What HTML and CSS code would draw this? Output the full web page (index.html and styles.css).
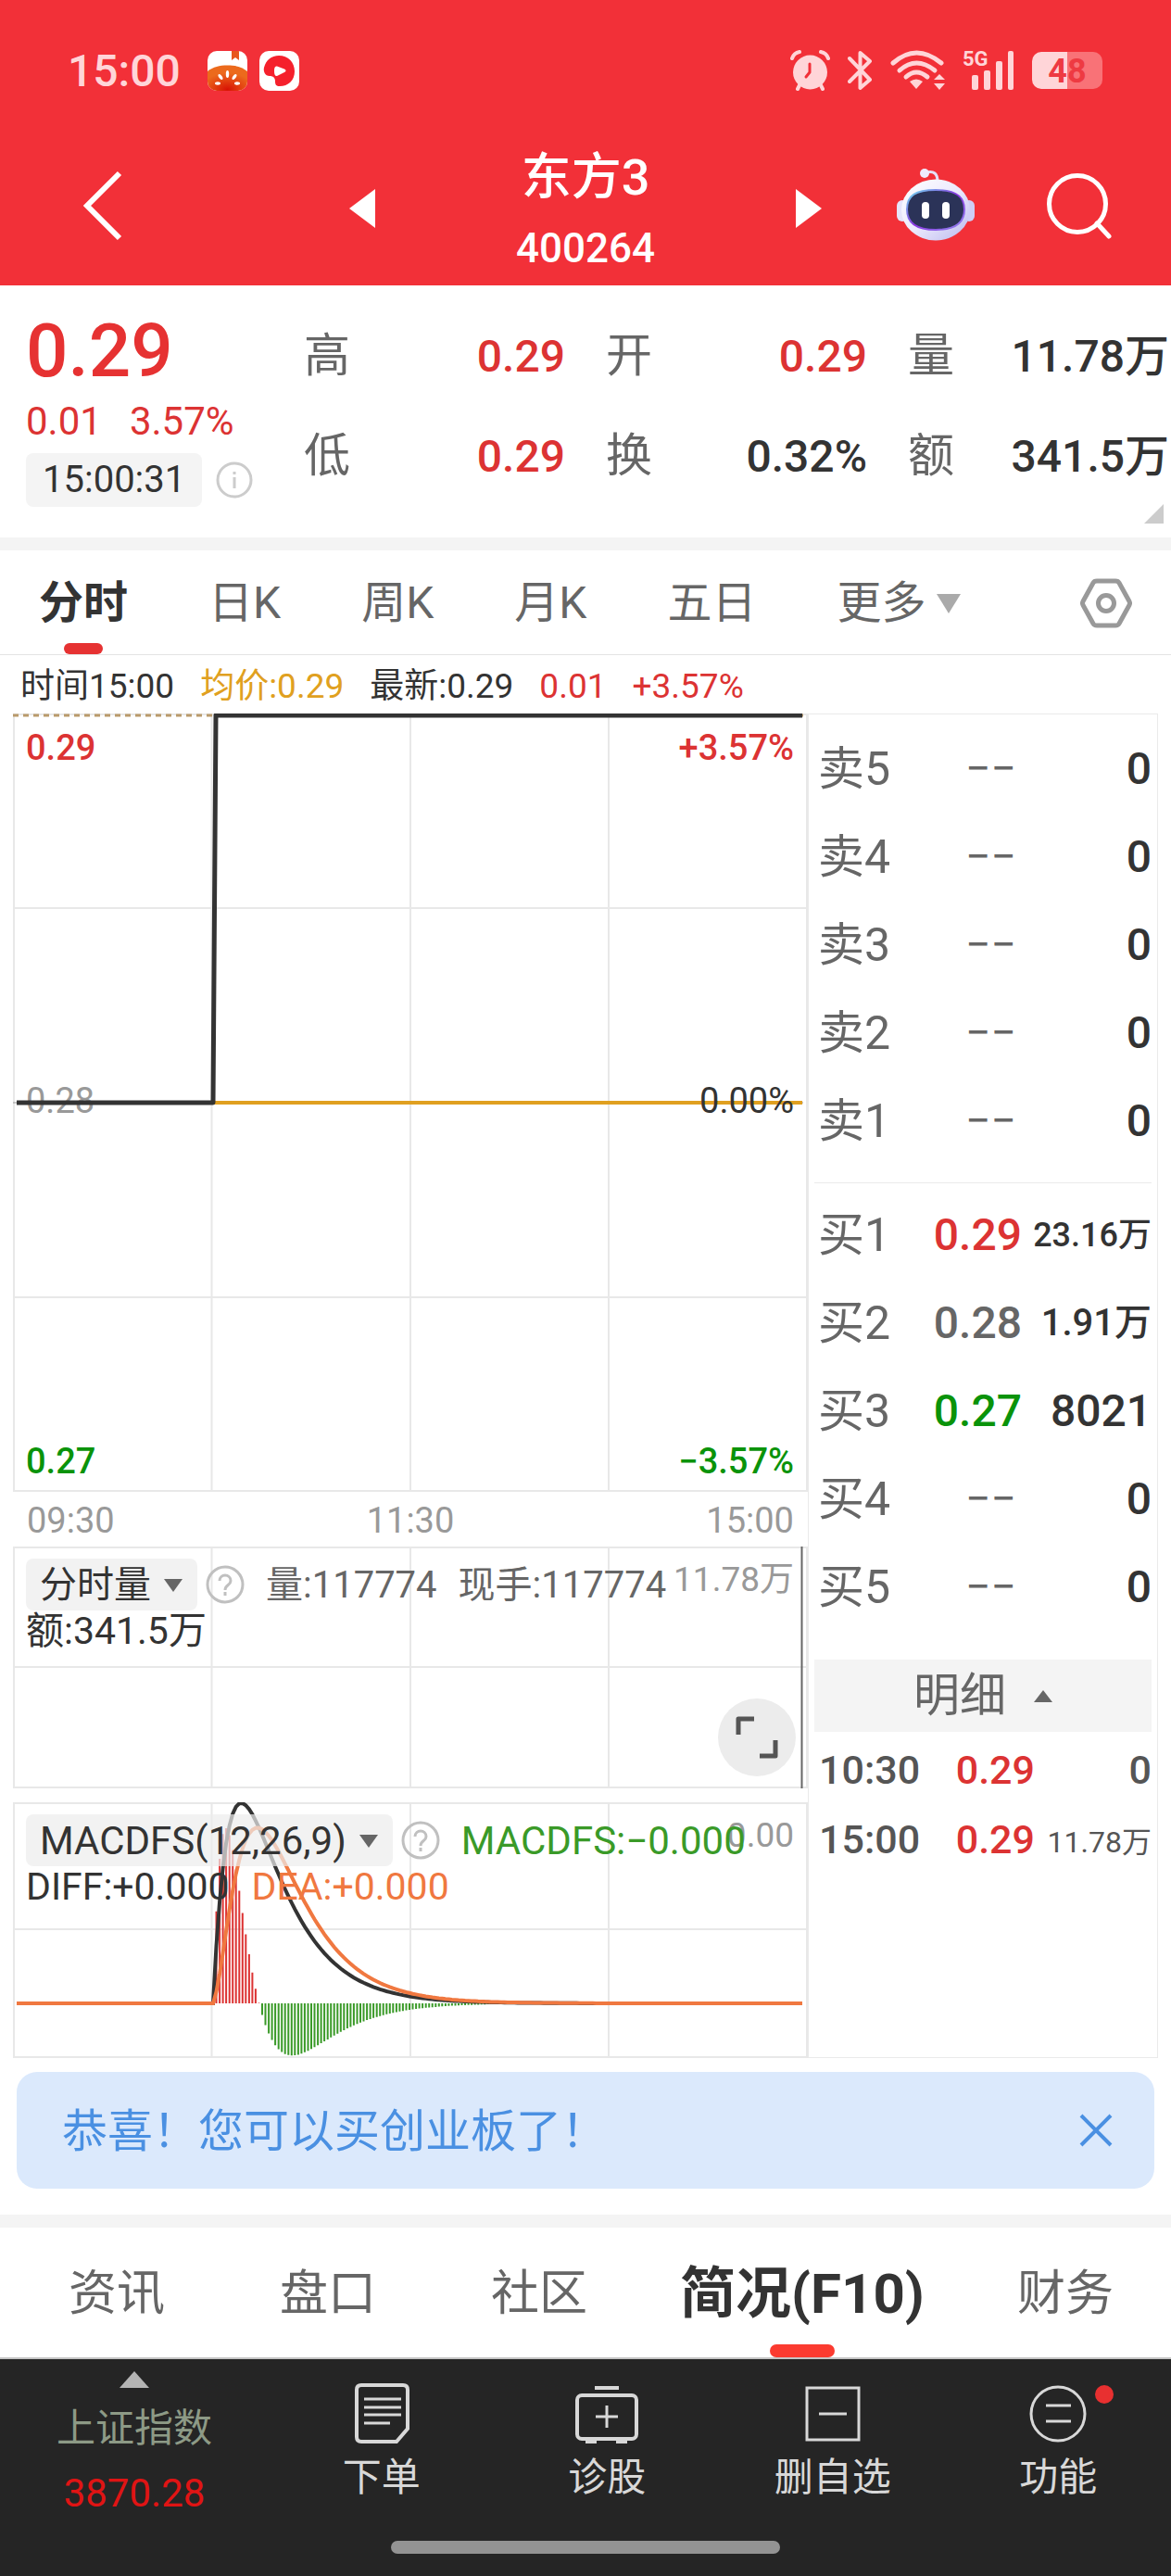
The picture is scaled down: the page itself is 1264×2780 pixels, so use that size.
FILE: index.html
```html
<!DOCTYPE html>
<html lang="zh-CN">
<head>
    <meta charset="UTF-8">
    <meta name="viewport" content="width=device-width, initial-scale=1.0">
    <title>东方3 400264</title>
    <link rel="stylesheet" href="styles.css">
</head>
<body>
    <header class="header">
        <div class="status-bar">
            <span class="clock">15:00</span>
            <div class="status-apps">
                <svg width="43" height="43" viewBox="0 0 43 43">
                    <defs>
                        <radialGradient id="tomato" cx="50%" cy="95%" r="65%">
                            <stop offset="0" stop-color="#d81204"/>
                            <stop offset="1" stop-color="#ec6a1c"/>
                        </radialGradient>
                        <clipPath id="appClip"><rect width="43" height="43" rx="10"/></clipPath>
                    </defs>
                    <g clip-path="url(#appClip)">
                        <rect width="43" height="43" fill="#fff"/>
                        <path d="M0 22C6 17 13 15.500 21.500 15.500S37 17 43 22V43H0z" fill="url(#tomato)"/>
                        <path d="M26 0h8v10l-4-3-4 3z" fill="#e8561c"/>
                        <g fill="#fff">
                            <ellipse cx="21.500" cy="25" rx="1.700" ry="4"/>
                            <ellipse cx="14" cy="28" rx="1.700" ry="3.500" transform="rotate(-35 14 28)"/>
                            <ellipse cx="29" cy="28" rx="1.700" ry="3.500" transform="rotate(35 29 28)"/>
                            <ellipse cx="11" cy="35" rx="3" ry="1.700"/>
                            <ellipse cx="32" cy="35" rx="3" ry="1.700"/>
                        </g>
                    </g>
                </svg>
                <svg width="43" height="43" viewBox="0 0 43 43">
                    <rect width="43" height="43" rx="10" fill="#fff"/>
                    <path d="M21 5C31 5 38 12 38 22S31 38 22 38C18 38 17 36 17 33C17 29 15 27 11 27C6 27 4 22 5 18C7 10 13 5 21 5z" fill="#f5202c"/>
                    <path d="M19 16.500c-2 0-3 1-3 5s1 6 3 5.500l8-4c2-1 2-2.500 0-3.500z" fill="#fff"/>
                </svg>
            </div>
            <div class="status-icons">
                <svg width="43" height="44" viewBox="0 0 43 44">
                    <g fill="none" stroke="#ffd5d8" stroke-linecap="round" stroke-width="4">
                        <path d="M10 38l-2 4M33 38l2 4"/>
                        <path d="M2 9Q4 3 10 2M41 9Q39 3 33 2"/>
                    </g>
                    <circle cx="21.500" cy="24" r="18.500" fill="#ffd5d8"/>
                    <path d="M21 15v9l-4 5" fill="none" stroke="#f23038" stroke-width="3" stroke-linecap="round" stroke-linejoin="round"/>
                </svg>
                <svg width="27" height="44" viewBox="0 0 27 44">
                    <path d="M2 9L24 32L13.500 41V3L24 12L2 34" fill="none" stroke="#ffd5d8" stroke-width="4" stroke-linecap="round" stroke-linejoin="round"/>
                </svg>
                <svg width="59" height="44" viewBox="0 0 59 44">
                    <g fill="none" stroke="#ffd5d8" stroke-width="5" stroke-linecap="round">
                        <path d="M3 14Q28 -8 55 14"/>
                        <path d="M10 22Q28 6 48 22"/>
                        <path d="M17 29Q28 19 40 29"/>
                    </g>
                    <path d="M21 34q7-5 14 0l-7 8z" fill="#ffd5d8"/>
                    <path d="M47 32l6-6 6 6zM47 36h12l-6 7z" fill="#ffd5d8"/>
                </svg>
                <div class="signal">
                    <span class="signal-type">5G</span>
                    <svg width="56" height="44" viewBox="0 0 56 44">
                        <g fill="#ffd5d8">
                            <rect x="10" y="27" width="7" height="16" rx="2"/>
                            <rect x="23" y="22" width="7" height="21" rx="2"/>
                            <rect x="36" y="12" width="7" height="31" rx="2"/>
                            <rect x="49" y="1" width="6" height="42" rx="2"/>
                        </g>
                    </svg>
                </div>
                <span class="battery">48</span>
            </div>
        </div>
        <div class="title-bar">
            <div class="title-left">
                <button class="icon-btn" aria-label="返回">
                    <svg width="44" height="76" viewBox="0 0 44 76"><path d="M41 3L6 38L41 73" fill="none" stroke="#fff" stroke-width="6"/></svg>
                </button>
            </div>
            <div class="title-switch">
                <button class="icon-btn" aria-label="上一只">
                    <svg width="28" height="42" viewBox="0 0 28 42"><path d="M28 0v42L0 21z" fill="#fff"/></svg>
                </button>
                <h1 class="stock-title">东方3<span>400264</span></h1>
                <button class="icon-btn" aria-label="下一只">
                    <svg width="28" height="42" viewBox="0 0 28 42"><path d="M0 0v42l28-21z" fill="#fff"/></svg>
                </button>
            </div>
            <div class="title-right">
                <button class="icon-btn" aria-label="智能助手">
                    <svg width="84" height="84" viewBox="0 0 84 84">
                        <defs>
                            <linearGradient id="shell" x1="0" y1="0" x2="1" y2="1">
                                <stop offset="0" stop-color="#fff"/>
                                <stop offset="0.5" stop-color="#eceafd"/>
                                <stop offset="1" stop-color="#b9b8ee"/>
                            </linearGradient>
                            <linearGradient id="rim" x1="0" y1="0" x2="1" y2="1">
                                <stop offset="0" stop-color="#6fe0ee"/>
                                <stop offset="0.5" stop-color="#8a35e0"/>
                                <stop offset="1" stop-color="#8f86ee"/>
                            </linearGradient>
                        </defs>
                        <path d="M32 6q12-3 12 10" fill="none" stroke="#e6e0f8" stroke-width="3"/>
                        <circle cx="30" cy="7" r="5" fill="#efeafd"/>
                        <rect x="0" y="36" width="12" height="23" rx="6" fill="#e6e4fb"/>
                        <rect x="72" y="36" width="12" height="23" rx="6" fill="#cfcdf6"/>
                        <ellipse cx="42" cy="46.500" rx="37" ry="33" fill="url(#shell)"/>
                        <path d="M42 25C64 25 73 32 73 46S63 68 42 68S11 61 11 46S20 25 42 25z" fill="#2b3358" stroke="url(#rim)" stroke-width="2"/>
                        <rect x="27" y="38" width="8" height="18" rx="4" fill="#fff"/>
                        <rect x="49" y="38" width="8" height="18" rx="4" fill="#fff"/>
                    </svg>
                </button>
                <button class="icon-btn" aria-label="搜索">
                    <svg width="70" height="72" viewBox="0 0 70 72">
                        <circle cx="33" cy="34" r="30.500" fill="none" stroke="#fff" stroke-width="5"/>
                        <path d="M54 55l13 14" stroke="#fff" stroke-width="5" stroke-linecap="round"/>
                    </svg>
                </button>
            </div>
        </div>
    </header>

    <section class="quote">
        <div class="quote-main">
            <div class="price up">0.29</div>
            <div class="change up"><span>0.01</span><span>3.57%</span></div>
            <div class="quote-time">
                <time>15:00:31</time>
                <svg width="40" height="40" viewBox="0 0 40 40">
                    <circle cx="20" cy="20" r="18" fill="none" stroke="#ccc" stroke-width="3"/>
                    <path d="M20 17v12M20 11v3" stroke="#ccc" stroke-width="3"/>
                </svg>
            </div>
        </div>
        <dl class="stats">
            <div><dt>高</dt><dd class="up">0.29</dd></div>
            <div><dt>开</dt><dd class="up">0.29</dd></div>
            <div><dt>量</dt><dd>11.78万</dd></div>
            <div><dt>低</dt><dd class="up">0.29</dd></div>
            <div><dt>换</dt><dd>0.32%</dd></div>
            <div><dt>额</dt><dd>341.5万</dd></div>
        </dl>
        <span class="corner"></span>
    </section>

    <nav class="period-tabs">
        <button class="active">分时</button>
        <button>日K</button>
        <button>周K</button>
        <button>月K</button>
        <button>五日</button>
        <button class="more">更多<i class="caret-down"></i></button>
        <button class="settings" aria-label="设置">
            <svg width="56" height="54" viewBox="0 0 56 54">
                <g fill="none" stroke="#999" stroke-width="5" stroke-linejoin="round">
                    <path d="M18 3h20q3 0 4 2l11 20q1 2 0 4L42 49q-1 2-4 2H18q-3 0-4-2L3 29q-1-2 0-4L14 5q1-2 4-2z"/>
                    <circle cx="28" cy="27" r="8.500"/>
                </g>
            </svg>
        </button>
    </nav>

    <div class="legend">
        <span>时间15:00</span>
        <span class="avg">均价:0.29</span>
        <span>最新:0.29</span>
        <span class="up">0.01</span>
        <span class="up">+3.57%</span>
    </div>

    <main class="board">
        <div class="charts">
            <div class="panel panel-price">
                <span class="axis axis-left axis-mid muted">0.28</span>
                <svg class="plot" viewBox="0 0 858 840" preserveAspectRatio="none">
                    <path class="grid" d="M1 0V840M214.500 0V840M429 0V840M643 0V840M857 0V840M0 1H858M0 210H858M0 630H858M0 839H858"/>
                    <path class="base" d="M0 420H858"/>
                    <path class="limit" d="M0 2H858"/>
                    <path class="line-avg" d="M216 420H852"/>
                    <path class="line-price" d="M4 420H216L219 2H852"/>
                </svg>
                <span class="axis axis-left axis-top up">0.29</span>
                <span class="axis axis-right axis-top up">+3.57%</span>
                <span class="axis axis-right axis-mid">0.00%</span>
                <span class="axis axis-left axis-bottom down">0.27</span>
                <span class="axis axis-right axis-bottom down">−3.57%</span>
            </div>
            <div class="times"><span>09:30</span><span>11:30</span><span>15:00</span></div>

            <div class="panel panel-volume">
                <svg class="plot" viewBox="0 0 858 261" preserveAspectRatio="none">
                    <path class="grid" d="M1 0V261M214.500 0V261M429 0V261M643 0V261M857 0V261M0 1H858M0 130H858M0 260H858"/>
                    <path class="volume-bar" d="M851.500 0V261"/>
                </svg>
                <span class="scale muted">11.78万</span>
                <div class="indicator">
                    <button class="picker">分时量<i class="caret-down"></i></button>
                    <svg class="help" width="42" height="42" viewBox="0 0 42 42">
                        <circle cx="21" cy="21" r="19" fill="none" stroke="#c0c0c0" stroke-width="3"/>
                        <path d="M15 17c0-8 12-8 12 0c0 5-6 4-6 10M21 29v4" fill="none" stroke="#c0c0c0" stroke-width="3"/>
                    </svg>
                    <span class="gray">量:117774</span>
                    <span class="gray">现手:117774</span>
                </div>
                <div class="indicator-sub"><span>额:341.5万</span></div>
                <button class="expand" aria-label="全屏">
                    <svg width="46" height="46" viewBox="0 0 46 46"><path d="M3 20V3H20M43 26V43H26" fill="none" stroke="#555" stroke-width="5" stroke-linejoin="round"/></svg>
                </button>
            </div>

            <div class="panel panel-macd">
                <svg class="plot" id="macd" viewBox="0 0 858 276" preserveAspectRatio="none">
                    <path class="grid" d="M1 0V276M214.500 0V276M429 0V276M643 0V276M857 0V276M0 1H858M0 137H858M0 275H858"/>
                    <path id="histUp" class="hist-up"/>
                    <path id="histDown" class="hist-down"/>
                    <path id="diff" class="line-diff"/>
                    <path id="dea" class="line-dea"/>
                </svg>
                <span class="scale muted">0.00</span>
                <div class="indicator indicator-wide">
                    <button class="picker">MACDFS(12,26,9)<i class="caret-down"></i></button>
                    <svg class="help" width="42" height="42" viewBox="0 0 42 42">
                        <circle cx="21" cy="21" r="19" fill="none" stroke="#c0c0c0" stroke-width="3"/>
                        <path d="M15 17c0-8 12-8 12 0c0 5-6 4-6 10M21 29v4" fill="none" stroke="#c0c0c0" stroke-width="3"/>
                    </svg>
                    <span class="macd-value">MACDFS:−0.000</span>
                </div>
                <div class="indicator-sub"><span>DIFF:+0.000</span><span class="dea-value">DEA:+0.000</span></div>
            </div>
        </div>

        <aside class="book">
            <table class="orders">
                <tbody>
                    <tr><th>卖5</th><td>−−</td><td>0</td></tr>
                    <tr><th>卖4</th><td>−−</td><td>0</td></tr>
                    <tr><th>卖3</th><td>−−</td><td>0</td></tr>
                    <tr><th>卖2</th><td>−−</td><td>0</td></tr>
                    <tr><th>卖1</th><td>−−</td><td>0</td></tr>
                </tbody>
            </table>
            <hr>
            <table class="orders">
                <tbody>
                    <tr><th>买1</th><td class="up">0.29</td><td class="qty-small">23.16万</td></tr>
                    <tr><th>买2</th><td class="flat">0.28</td><td class="qty-medium">1.91万</td></tr>
                    <tr><th>买3</th><td class="down">0.27</td><td>8021</td></tr>
                    <tr><th>买4</th><td>−−</td><td>0</td></tr>
                    <tr><th>买5</th><td>−−</td><td>0</td></tr>
                </tbody>
            </table>
            <button class="detail-toggle">明细<i class="caret-up"></i></button>
            <table class="ticks">
                <tbody>
                    <tr><td>10:30</td><td class="up">0.29</td><td>0</td></tr>
                    <tr><td>15:00</td><td class="up">0.29</td><td class="tick-small">11.78万</td></tr>
                </tbody>
            </table>
        </aside>
    </main>

    <div class="banner">
        <a href="#">恭喜！您可以买创业板了！</a>
        <button class="icon-btn" aria-label="关闭">
            <svg width="36" height="36" viewBox="0 0 36 36"><path d="M2 2l32 32M34 2L2 34" stroke="#4a90e2" stroke-width="4"/></svg>
        </button>
    </div>

    <nav class="info-tabs">
        <button>资讯</button>
        <button>盘口</button>
        <button>社区</button>
        <button class="active">简况(F10)</button>
        <button>财务</button>
    </nav>

    <footer class="footer">
        <div class="toolbar">
            <a class="index" href="#">
                <i class="index-arrow"></i>
                <span class="index-name">上证指数</span>
                <span class="index-value">3870.28</span>
            </a>
            <a class="tool" href="#">
                <svg width="68" height="68" viewBox="0 0 68 68">
                    <g fill="none" stroke="#d8d8d8" stroke-width="4">
                        <path d="M12 4H57Q62 4 62 9V51L50 65H12Q7 65 7 60V9Q7 4 12 4z"/>
                        <path d="M15 19H55M15 28H55M15 36H55M15 45H43" stroke-width="3"/>
                    </g>
                </svg>
                下单
            </a>
            <a class="tool" href="#">
                <svg width="68" height="68" viewBox="0 0 68 68">
                    <g fill="none" stroke="#d8d8d8" stroke-width="4">
                        <rect x="2" y="15" width="64" height="47" rx="5"/>
                        <path d="M21 7H47M11 65H23M44 65H56"/>
                        <path d="M34 26V50M22 38H46" stroke-width="3"/>
                    </g>
                </svg>
                诊股
            </a>
            <a class="tool" href="#">
                <svg width="68" height="68" viewBox="0 0 68 68">
                    <g fill="none" stroke="#d8d8d8" stroke-width="3">
                        <rect x="6" y="7" width="56" height="56"/>
                        <path d="M19 35H49"/>
                    </g>
                </svg>
                删自选
            </a>
            <a class="tool" href="#">
                <svg width="68" height="68" viewBox="0 0 68 68">
                    <g fill="none" stroke="#d8d8d8" stroke-width="3">
                        <circle cx="34" cy="35" r="29"/>
                        <path d="M21 26H48M21 43H48"/>
                    </g>
                </svg>
                功能
                <i class="dot"></i>
            </a>
        </div>
        <div class="home-bar"></div>
    </footer>

    <script src="chart.js"></script>
</body>
</html>
```

FILE: styles.css
```css
* {
    box-sizing: border-box;
}
body {
    margin: 0;
    font-family: Roboto, "Noto Sans CJK SC", sans-serif;
    font-size: 48px;
    color: #333;
    background: #fff;
}
button {
    padding: 0;
    border: none;
    background: none;
    font: inherit;
    color: inherit;
}
a {
    color: inherit;
    text-decoration: none;
}
svg {
    display: block;
    flex: none;
}
.up {
    color: #dc3333;
}
.down {
    color: #0a930a;
}
.flat, .gray {
    color: #666;
}
.muted {
    color: #999;
}
.caret-down, .caret-up {
    display: inline-block;
    border: 10px solid transparent;
}
.caret-down {
    border-top: 14px solid #666;
    border-bottom: none;
}
.caret-up {
    border-bottom: 13px solid #666;
    border-top: none;
}

/* header */
.header {
    background: #f23038;
    color: #fff;
}
.status-bar {
    display: flex;
    align-items: center;
    height: 152px;
    padding: 0 74px 0 73px;
}
.clock {
    font-weight: 500;
    color: #ffd5d8;
    margin-right: 29px;
}
.status-apps {
    display: flex;
    gap: 13px;
}
.status-icons {
    display: flex;
    align-items: center;
    gap: 19px;
    margin-left: auto;
}
.signal {
    position: relative;
}
.signal-type {
    position: absolute;
    left: 0;
    top: 0;
    font-size: 22px;
    line-height: 20px;
    font-weight: 700;
    color: #ffd5d8;
}
.battery {
    width: 76px;
    height: 40px;
    border-radius: 10px;
    background: linear-gradient(90deg, #ffd5d8 50%, #f97277 50%);
    color: #ee3a42;
    font-size: 36px;
    line-height: 42px;
    font-weight: 700;
    text-align: center;
}
.title-bar {
    display: grid;
    grid-template-columns: 1fr 511px 1fr;
    height: 156px;
}
.title-left, .title-right {
    display: flex;
    align-items: center;
    padding-bottom: 16px;
}
.title-left {
    padding-left: 88px;
}
.title-right {
    justify-content: space-between;
    padding-left: 80px;
    padding-right: 64px;
}
.title-switch {
    display: flex;
    align-items: center;
    justify-content: space-between;
}
.title-switch .icon-btn {
    padding-bottom: 10px;
}
.stock-title {
    margin: 0;
    font-size: 54px;
    font-weight: 500;
    line-height: 76px;
    text-align: center;
}
.stock-title span {
    display: block;
    font-size: 44px;
}

/* quote */
.quote {
    position: relative;
    display: grid;
    grid-template-columns: 300px 1fr;
    padding: 19px 2px 33px 28px;
    border-bottom: 14px solid #f4f4f4;
}
.price {
    font-size: 80px;
    line-height: 104px;
    font-weight: 500;
    color: #e63232;
}
.change {
    display: flex;
    gap: 30px;
    font-size: 42px;
    line-height: 48px;
}
.quote-time {
    display: flex;
    align-items: center;
    gap: 15px;
    margin-top: 10px;
}
.quote-time time {
    padding: 0 18px;
    border-radius: 8px;
    background: #f4f4f4;
    font-size: 40px;
    line-height: 58px;
}
.stats {
    display: grid;
    grid-template-columns: repeat(3, 1fr);
    column-gap: 44px;
    margin: 4px 0 0;
    line-height: 107px;
}
.stats div {
    display: flex;
    justify-content: space-between;
}
.stats dt {
    font-size: 50px;
    color: #666;
}
.stats dd {
    margin: 0;
    font-weight: 500;
}
.corner {
    position: absolute;
    right: 8px;
    bottom: 15px;
    border-left: 21px solid transparent;
    border-bottom: 21px solid #ccc;
}

/* tabs above the chart */
.period-tabs {
    display: flex;
    gap: 87px;
    padding: 2px 42px 0;
    border-bottom: 1px solid #e4e4e4;
    font-size: 48px;
    line-height: 110px;
    color: #666;
}
.period-tabs .active {
    position: relative;
    font-weight: 700;
    color: #333;
}
.period-tabs .active::after {
    content: "";
    position: absolute;
    left: 27px;
    right: 27px;
    bottom: 0;
    height: 12px;
    border-radius: 6px;
    background: #e63232;
}
.more {
    display: flex;
    align-items: center;
    gap: 12px;
}
.more .caret-down {
    border-width: 21px 13px 0;
    border-top-color: #aaa;
}
.settings {
    margin-left: auto;
}
.legend {
    display: flex;
    gap: 28px;
    padding: 4px 22px 0;
    font-size: 37px;
    line-height: 59px;
}
.avg {
    color: #e0a020;
}

/* charts */
.board {
    display: grid;
    grid-template-columns: minmax(0, 1fr) 378px;
    padding: 0 14px;
}
.panel {
    position: relative;
}
.plot {
    position: absolute;
    inset: 0;
    width: 100%;
    height: 100%;
}
.plot path {
    fill: none;
    vector-effect: non-scaling-stroke;
}
.plot .grid {
    stroke: #e8e8e8;
    stroke-width: 2;
}
.plot .base {
    stroke: #999;
    stroke-width: 1;
    stroke-dasharray: 6 5;
}
.plot .limit {
    stroke: #b99a6b;
    stroke-width: 3;
    stroke-dasharray: 6 5;
}
.plot .line-avg {
    stroke: #e0a020;
    stroke-width: 4;
}
.plot .line-price {
    stroke: #333;
    stroke-width: 5;
    stroke-linejoin: round;
}
.plot .volume-bar {
    stroke: #666;
    stroke-width: 2;
}
.plot .hist-up {
    stroke: #dc3333;
    stroke-width: 2;
}
.plot .hist-down {
    stroke: #3a9a28;
    stroke-width: 2;
}
.plot .line-diff {
    stroke: #333;
    stroke-width: 4;
}
.plot .line-dea {
    stroke: #f07840;
    stroke-width: 4;
}
.panel-price {
    height: 840px;
}
.axis {
    position: absolute;
    font-size: 38px;
    line-height: 40px;
}
.axis-left {
    left: 14px;
}
.axis-right {
    right: 15px;
}
.axis-top {
    top: 17px;
    font-weight: 500;
}
.axis-mid {
    top: 398px;
}
.axis-bottom {
    bottom: 13px;
    font-weight: 500;
}
.times {
    display: flex;
    justify-content: space-between;
    padding: 3px 15px 0;
    font-size: 38px;
    line-height: 56px;
    color: #999;
}
.panel-volume {
    height: 261px;
    margin-bottom: 15px;
    padding-top: 13px;
}
.panel-macd {
    height: 276px;
    padding-top: 13px;
}
.scale {
    position: absolute;
    top: 14px;
    right: 15px;
    font-size: 37px;
    line-height: 44px;
}
.indicator {
    position: relative;
    display: flex;
    align-items: center;
    gap: 23px;
    padding-left: 14px;
    font-size: 40px;
    line-height: 56px;
    white-space: nowrap;
}
.indicator-wide {
    font-size: 42px;
}
.picker {
    display: flex;
    align-items: center;
    gap: 14px;
    padding: 2px 16px 0 15px;
    border-radius: 8px;
    background: rgba(236, 236, 236, 0.7);
    line-height: 54px;
}
.indicator span {
    padding-top: 2px;
    line-height: 54px;
}
.help {
    margin-left: -14px;
}
.indicator-sub {
    position: relative;
    display: flex;
    gap: 24px;
    padding-left: 14px;
    font-size: 41px;
    line-height: 44px;
}
.macd-value {
    color: #3a9a28;
}
.dea-value {
    color: #f07840;
}
.expand {
    position: absolute;
    right: 13px;
    bottom: 13px;
    display: flex;
    align-items: center;
    justify-content: center;
    width: 84px;
    height: 84px;
    border-radius: 50%;
    background: #ececec;
}

/* order book */
.book {
    padding: 11px 6px 0;
    border: 1px solid #eaeaea;
    font-weight: 500;
}
.book table {
    width: 100%;
    border-collapse: collapse;
    table-layout: fixed;
}
.book th, .book td {
    padding: 0;
    white-space: nowrap;
    text-align: right;
}
.orders th {
    width: 98px;
    padding-left: 4px;
    font-size: 50px;
    font-weight: 400;
    color: #666;
}
.orders th, .orders td {
    height: 95px;
    line-height: 56px;
}
.orders td:nth-child(2) {
    width: 126px;
}
.orders th:first-child {
    padding-left: 4px;
    text-align: left;
}
.orders td:nth-child(2):not([class]) {
    padding-right: 6px;
    font-weight: 400;
    color: #666;
}
.book .qty-small {
    font-size: 36px;
}
.book .qty-medium {
    font-size: 40px;
}
.book hr {
    margin: 19px 0 8px;
    border: none;
    border-top: 1px solid #eaeaea;
}
.detail-toggle {
    display: flex;
    align-items: center;
    justify-content: center;
    gap: 30px;
    width: 100%;
    margin: 31px 0 3px;
    background: #f4f4f4;
    line-height: 78px;
    font-size: 50px;
    font-weight: 400;
    color: #666;
}
.ticks td {
    height: 75px;
    font-size: 43px;
    color: #555;
}
.ticks td:first-child {
    width: 114px;
    padding-left: 5px;
    text-align: left;
}
.ticks td:nth-child(2) {
    width: 124px;
}
.ticks .up {
    color: #dc3333;
}
.ticks .tick-small {
    font-size: 32px;
    font-weight: 400;
}

/* banner */
.banner {
    display: flex;
    align-items: center;
    justify-content: space-between;
    margin: 15px 18px 28px;
    padding: 0 45px 0 49px;
    border-radius: 22px;
    background: #dbe9fc;
    color: #4a90e2;
    font-size: 49px;
    line-height: 122px;
}
.banner a {
    padding-top: 4px;
}

/* lower tabs */
.info-tabs {
    display: flex;
    gap: 124px;
    padding: 0 74px;
    border-top: 14px solid #f4f4f4;
    border-bottom: 2px solid #c4c4c4;
    font-size: 52px;
    line-height: 136px;
    color: #666;
    white-space: nowrap;
}
.info-tabs button {
    padding-top: 4px;
}
.info-tabs .active {
    position: relative;
    margin: 0 -24px;
    font-size: 60px;
    font-weight: 700;
    color: #333;
}
.info-tabs .active::after {
    content: "";
    position: absolute;
    left: 50%;
    bottom: 0;
    width: 70px;
    height: 14px;
    margin-left: -35px;
    border-radius: 7px;
    background: #fb3b30;
}

/* bottom toolbar */
.footer {
    padding-bottom: 25px;
    background: #252525;
}
.toolbar {
    display: grid;
    grid-template-columns: 290px repeat(4, 1fr);
    height: 196px;
    font-size: 42px;
    text-align: center;
}
.index {
    padding-top: 13px;
    line-height: 70px;
}
.index span {
    display: block;
}
.index-arrow {
    display: block;
    width: 32px;
    margin: 0 auto 9px;
    border: 16px solid transparent;
    border-top: none;
    border-bottom: 18px solid #b4b4b4;
}
.index-name {
    color: #8d9a86;
}
.index-value {
    color: #e01414;
}
.tool {
    position: relative;
    padding-top: 24px;
    line-height: 52px;
    color: #d8d8d8;
}
.tool svg {
    margin: 0 auto 10px;
}
.dot {
    position: absolute;
    top: 28px;
    left: 50%;
    width: 20px;
    height: 20px;
    margin-left: 40px;
    border-radius: 50%;
    background: #e83030;
}
.home-bar {
    width: 420px;
    height: 14px;
    margin: 0 auto;
    border-radius: 7px;
    background: #939393;
}
```

FILE: chart.js
```js
// MACD(12,26,9) of the one-minute prices: 0.28 until 10:30, then 0.29
const prices = [];
for (let i = 0; i <= 240; i++) {
    prices.push(i <= 60 ? 0.28 : 0.29);
}

function ema(values, days) {
    const out = [values[0]];
    for (let i = 1; i < values.length; i++) {
        out.push((values[i] * 2 + out[i - 1] * (days - 1)) / (days + 1));
    }
    return out;
}

const fast = ema(prices, 12);
const slow = ema(prices, 26);
const diff = fast.map((v, i) => v - slow[i]);
const dea = ema(diff, 9);

const zero = 217;
const scale = 216 / Math.max(...diff);
const x = i => (4 + i * 848 / 240).toFixed(1);
const y = v => (zero - v * scale).toFixed(1);
const line = values => 'M' + values.map((v, i) => x(i) + ' ' + y(v)).join('L');

let up = '';
let down = '';
diff.forEach((v, i) => {
    const bar = 2 * (v - dea[i]);
    const d = 'M' + x(i) + ' ' + zero + 'V' + y(bar);
    if (bar > 0.000001) up += d;
    if (bar < -0.000001) down += d;
});

document.getElementById('diff').setAttribute('d', line(diff));
document.getElementById('dea').setAttribute('d', line(dea));
document.getElementById('histUp').setAttribute('d', up);
document.getElementById('histDown').setAttribute('d', down);
```
